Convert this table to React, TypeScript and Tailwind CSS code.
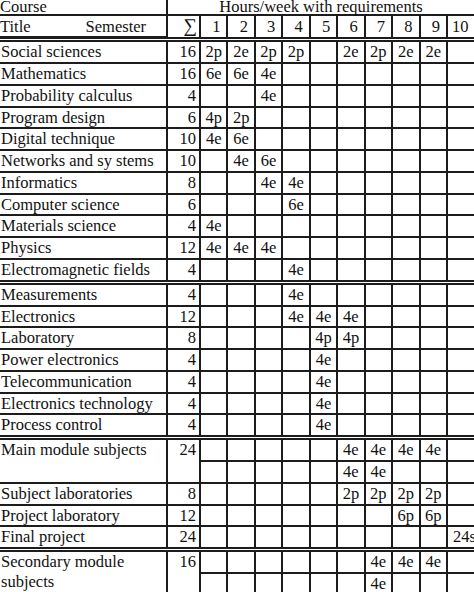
import React from "react";

type Row = { title: string; sum: string; vals: Record<number, string>; vals2?: Record<number, string> };

const groupA: Row[] = [
  { title: "Social sciences", sum: "16", vals: { 1: "2p", 2: "2e", 3: "2p", 4: "2p", 6: "2e", 7: "2p", 8: "2e", 9: "2e" } },
  { title: "Mathematics", sum: "16", vals: { 1: "6e", 2: "6e", 3: "4e" } },
  { title: "Probability calculus", sum: "4", vals: { 3: "4e" } },
  { title: "Program design", sum: "6", vals: { 1: "4p", 2: "2p" } },
  { title: "Digital technique", sum: "10", vals: { 1: "4e", 2: "6e" } },
  { title: "Networks and sy stems", sum: "10", vals: { 2: "4e", 3: "6e" } },
  { title: "Informatics", sum: "8", vals: { 3: "4e", 4: "4e" } },
  { title: "Computer science", sum: "6", vals: { 4: "6e" } },
  { title: "Materials science", sum: "4", vals: { 1: "4e" } },
  { title: "Physics", sum: "12", vals: { 1: "4e", 2: "4e", 3: "4e" } },
  { title: "Electromagnetic fields", sum: "4", vals: { 4: "4e" } },
];

const groupB: Row[] = [
  { title: "Measurements", sum: "4", vals: { 4: "4e" } },
  { title: "Electronics", sum: "12", vals: { 4: "4e", 5: "4e", 6: "4e" } },
  { title: "Laboratory", sum: "8", vals: { 5: "4p", 6: "4p" } },
  { title: "Power electronics", sum: "4", vals: { 5: "4e" } },
  { title: "Telecommunication", sum: "4", vals: { 5: "4e" } },
  { title: "Electronics technology", sum: "4", vals: { 5: "4e" } },
  { title: "Process control", sum: "4", vals: { 5: "4e" } },
];

const groupC: Row[] = [
  { title: "Main module subjects", sum: "24", vals: { 6: "4e", 7: "4e", 8: "4e", 9: "4e" }, vals2: { 6: "4e", 7: "4e" } },
  { title: "Subject laboratories", sum: "8", vals: { 6: "2p", 7: "2p", 8: "2p", 9: "2p" } },
  { title: "Project laboratory", sum: "12", vals: { 8: "6p", 9: "6p" } },
  { title: "Final project", sum: "24", vals: { 10: "24s" } },
];

const groupD: Row[] = [
  { title: "Secondary module subjects", sum: "16", vals: { 7: "4e", 8: "4e", 9: "4e" }, vals2: { 7: "4e" } },
];

const cols = [1, 2, 3, 4, 5, 6, 7, 8, 9, 10];

function ValueCells({ vals, k }: { vals: Record<number, string>; k: string }) {
  return (
    <>
      {cols.map((c) => (
        <div
          key={k + c}
          className={
            c === 10
              ? "bg-white leading-[19.75px] pl-[5px] whitespace-nowrap"
              : "bg-white leading-[19.75px] text-center whitespace-nowrap"
          }
        >
          {vals[c] ?? ""}
        </div>
      ))}
    </>
  );
}

function RowCells({ row, idx }: { row: Row; idx: string }) {
  if (row.vals2) {
    return (
      <>
        <div className="bg-white row-span-2 leading-[20px] pl-[1px]">{row.title}</div>
        <div className="bg-white row-span-2 leading-[19.75px] text-right pr-[3px]">{row.sum}</div>
        <ValueCells vals={row.vals} k={idx + "a"} />
        <ValueCells vals={row.vals2} k={idx + "b"} />
      </>
    );
  }
  return (
    <>
      <div className="bg-white leading-[19.75px] pl-[1px] whitespace-nowrap">{row.title}</div>
      <div className="bg-white leading-[19.75px] text-right pr-[3px]">{row.sum}</div>
      <ValueCells vals={row.vals} k={idx} />
    </>
  );
}

function Sep() {
  return <div className="col-span-12 h-[1.3px] bg-white" />;
}

export default function App() {
  return (
    <div className="w-[474px] h-[592px] overflow-hidden bg-white">
      <div
        className="grid grid-cols-[166px_31px_repeat(9,25.45px)_26px] gap-[2px] bg-[#1c1c1c] text-[16.5px] text-[#111]"
        style={{ fontFamily: '"Liberation Serif", "Times New Roman", serif' }}
      >
        <div className="bg-white h-[14px] leading-[14px] whitespace-nowrap">Course</div>
        <div className="bg-white col-span-11 h-[14px] leading-[14px] text-center whitespace-nowrap">
          Hours/week with requirements
        </div>

        <div className="bg-white h-[20px] leading-[20px] pt-[1px] flex whitespace-nowrap">
          <span>Title</span>
          <span className="ml-[55px]">Semester</span>
        </div>
        <div className="bg-white leading-[20px] text-[19px] text-right pr-[2px]">∑</div>
        {cols.map((c) => (
          <div
            key={"h" + c}
            className={
              c === 10
                ? "bg-white leading-[20px] pt-[1px] pl-[4px]"
                : "bg-white leading-[20px] pt-[1px] text-right pr-[6px]"
            }
          >
            {c}
          </div>
        ))}
        <Sep />

        {groupA.map((r, i) => (
          <RowCells key={"a" + i} row={r} idx={"a" + i} />
        ))}
        <Sep />
        {groupB.map((r, i) => (
          <RowCells key={"b" + i} row={r} idx={"b" + i} />
        ))}
        <Sep />
        {groupC.map((r, i) => (
          <RowCells key={"c" + i} row={r} idx={"c" + i} />
        ))}
        <Sep />
        {groupD.map((r, i) => (
          <RowCells key={"d" + i} row={r} idx={"d" + i} />
        ))}
      </div>
    </div>
  );
}
